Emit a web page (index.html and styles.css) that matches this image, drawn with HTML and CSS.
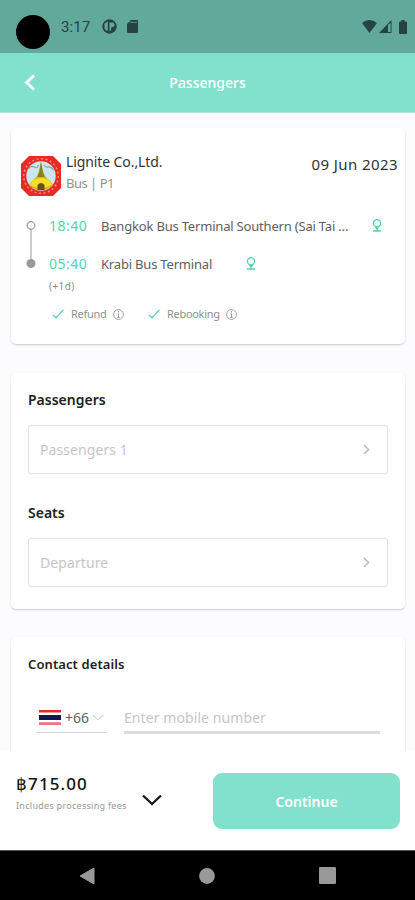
FILE: index.html
```html
<!DOCTYPE html>
<html lang="en">
<head>
<meta charset="utf-8">
<title>Passengers</title>
<link rel="stylesheet" href="styles.css">
</head>
<body>
<div class="status">
  <span class="camera"></span>
  <span class="clock">3:17</span>
  <svg class="s-app" width="15" height="15" viewBox="0 0 15 15"><circle cx="7.5" cy="7.5" r="7.2" fill="#27433f"/><path d="M2.500 4.500L5.800 2.200v9.300L4 11.500 2.500 9.500zM7.500 3.500h3.700l1.500 2-1 2.300-2.200.4L8.700 12h-1.200z" fill="#60a99b"/></svg>
  <svg class="s-sd" width="11" height="13" viewBox="0 0 11 13"><path d="M4 0h6a1 1 0 0 1 1 1v11a1 1 0 0 1-1 1H1a1 1 0 0 1-1-1V4z" fill="#27433f"/><path d="M3 2.400h7" stroke="#4b8579" stroke-width="1.200"/></svg>
  <span class="grow"></span>
  <svg width="15" height="13" viewBox="0 0 15 13"><path d="M0 3Q7.500-3 15 3L7.500 13z" fill="#27433f"/></svg>
  <svg class="s-cell" width="13" height="13" viewBox="0 0 13 13"><path d="M0 13L12.500 0v13z" fill="#27433f"/><path d="M9 5v7h2.600V3z" fill="#60a99b"/></svg>
  <svg class="s-bat" width="8" height="14" viewBox="0 0 8 14"><path d="M2.500 0h3v1.500H7a1 1 0 0 1 1 1V13a1 1 0 0 1-1 1H1a1 1 0 0 1-1-1V2.500a1 1 0 0 1 1-1h1.500z" fill="#27433f"/></svg>
</div>
<header class="bar">
  <svg class="back" width="12" height="17" viewBox="0 0 12 17"><path d="M10 1.500L2.500 8.500l7.500 7" fill="none" stroke="#fff" stroke-width="2.800"/></svg>
  <h1>Passengers</h1>
</header>
<main>
  <section class="card trip">
    <div class="operator">
      <svg width="40" height="40" viewBox="0 0 40 40"><path d="M8 0h24l3 3 5 5v24l-5 5-3 3H8l-3-3-5-5V8l5-5z" fill="#e92a24"/><circle cx="20" cy="20" r="17.300" fill="none" stroke="#f28d87" stroke-width="1.500" stroke-dasharray="2 2.500"/><circle cx="20" cy="20" r="14.700" fill="#cbe6ec"/><path d="M7.500 13q3-4 6-2t4-2M23 9q2 3 4 2t6 3" fill="none" stroke="#8ca3a5" stroke-width="1.200"/><path d="M20 5l2 10 2 5 5 5 3 4q-5 5-12 5T8 29l3-4 5-5 2-5z" fill="#d0b71f"/><path d="M20 6l1.800 10 2 5h-7.600l2-5z" fill="#85812b"/><path d="M12 24q8-4 16 0l3 5q-11 6-22 0z" fill="#f4df22"/><path d="M16.500 34v-5q3.500-4 7 0v5z" fill="#6e4a17"/></svg>
      <div class="who"><div class="name">Lignite Co.,Ltd.</div><div class="kind">Bus | P1</div></div>
      <div class="date">09 Jun 2023</div>
    </div>
    <div class="route">
      <svg class="line" width="10" height="50" viewBox="0 0 10 50"><path d="M5 9v32" stroke="#b0b0b0" stroke-width="1.300"/><circle cx="5" cy="5.500" r="3.800" fill="#fff" stroke="#999" stroke-width="1.200"/><circle cx="5" cy="43.500" r="4.500" fill="#999"/></svg>
      <div class="stops">
        <div class="stop"><span class="time">18:40</span><span class="place p1">Bangkok Bus Terminal Southern (Sai Tai ...</span><svg width="10" height="13" viewBox="0 0 10 13"><g fill="none" stroke="#55d2af" stroke-width="1.300"><circle cx="5" cy="4.300" r="3.600"/><path d="M3.300 7.500L5 10.500l1.700-3M5 8v4M.8 12h8.400"/></g></svg></div>
        <div class="stop"><span class="time">05:40</span><span class="place p2">Krabi Bus Terminal</span><svg width="10" height="13" viewBox="0 0 10 13"><g fill="none" stroke="#55d2af" stroke-width="1.300"><circle cx="5" cy="4.300" r="3.600"/><path d="M3.300 7.500L5 10.500l1.700-3M5 8v4M.8 12h8.400"/></g></svg></div>
        <div class="next">(+1d)</div>
      </div>
    </div>
    <div class="perks">
      <svg width="12" height="10" viewBox="0 0 12 10"><path d="M.8 5.800l3.200 3L11.300 1" fill="none" stroke="#66d6b5" stroke-width="1.400"/></svg>
      <span class="perk refund">Refund</span>
      <svg class="info" width="11" height="11" viewBox="0 0 11 11"><circle cx="5.500" cy="5.500" r="4.900" fill="none" stroke="#a0a0a0"/><path d="M5.500 2.200v1.300M4.500 4.800h1v3.500M4.200 8.400h2.600" fill="none" stroke="#999"/></svg>
      <svg class="tick2" width="12" height="10" viewBox="0 0 12 10"><path d="M.8 5.800l3.200 3L11.300 1" fill="none" stroke="#66d6b5" stroke-width="1.400"/></svg>
      <span class="perk rebook">Rebooking</span>
      <svg class="info" width="11" height="11" viewBox="0 0 11 11"><circle cx="5.500" cy="5.500" r="4.900" fill="none" stroke="#a0a0a0"/><path d="M5.500 2.200v1.300M4.500 4.800h1v3.500M4.200 8.400h2.600" fill="none" stroke="#999"/></svg>
    </div>
  </section>
  <section class="card choices">
    <h2 class="h-pass">Passengers</h2>
    <div class="field"><span class="f1">Passengers 1</span><svg width="7" height="11" viewBox="0 0 7 11"><path d="M1 1l4.500 4.500L1 10" fill="none" stroke="#bdbdbd" stroke-width="1.700"/></svg></div>
    <h2 class="h-seats">Seats</h2>
    <div class="field"><span class="f2">Departure</span><svg width="7" height="11" viewBox="0 0 7 11"><path d="M1 1l4.500 4.500L1 10" fill="none" stroke="#bdbdbd" stroke-width="1.700"/></svg></div>
  </section>
  <section class="card contact">
    <h2 class="h-contact">Contact details</h2>
    <div class="phone">
      <div class="code">
        <svg width="22" height="15" viewBox="0 0 22 15"><path fill="#fff" d="M0 0h22v15H0z"/><path fill="#e22b2e" d="M0 0h22v2.500H0z"/><path fill="#15154f" d="M0 5h22v5H0z"/><path fill="#f0747a" d="M0 12.200h22V15H0z"/></svg>
        <span>+66</span>
        <svg width="12" height="7" viewBox="0 0 12 7"><path d="M.7.800L6 5.800 11.300.800" fill="none" stroke="#ccc" stroke-width="1.100"/></svg>
      </div>
      <div class="number">Enter mobile number</div>
    </div>
  </section>
</main>
<footer>
  <div class="total"><div class="price">฿715.00</div><div class="fees">Includes processing fees</div></div>
  <svg class="expand" width="20" height="12" viewBox="0 0 20 12"><path d="M1 1.500l9 8.500 9-8.500" fill="none" stroke="#161616" stroke-width="2.300"/></svg>
  <button>Continue</button>
</footer>
<nav>
  <svg width="16" height="18" viewBox="0 0 16 18"><path d="M15 1v16L1 9z" fill="#999" stroke="#999" stroke-linejoin="round"/></svg>
  <svg width="16" height="16" viewBox="0 0 16 16"><circle cx="8" cy="8" r="7.900" fill="#999"/></svg>
  <svg width="17" height="17" viewBox="0 0 17 17"><rect width="17" height="17" rx="1.300" fill="#999"/></svg>
</nav>
</body>
</html>
```
FILE: styles.css
```css
* { box-sizing: border-box; }
body {
  margin: 0;
  width: 415px;
  height: 900px;
  display: flex;
  flex-direction: column;
  overflow: hidden;
  background: #fcfcfe;
  color: #333;
  font-family: "Noto Sans", sans-serif;
  white-space: nowrap;
}
svg { display: block; flex: none; }
h1, h2 { margin: 0; }
.grow { flex: 1; }

.status {
  height: 53px;
  flex: none;
  display: flex;
  align-items: center;
  padding: 0 8px 0 16px;
  background: #60a99b;
}
.camera {
  width: 34px;
  height: 34px;
  margin-top: 11px;
  border-radius: 50%;
  background: #000;
}
.clock {
  width: 41px;
  margin-left: 11px;
  font: 15px/20px Roboto, sans-serif;
  letter-spacing: .1px;
  color: #27433f;
}
.s-sd { margin-left: 10px; }
.s-cell { margin-left: 2px; }
.s-bat { margin-left: 7px; }

.bar {
  height: 60px;
  flex: none;
  display: grid;
  grid-template-columns: 24px 1fr 24px;
  align-items: center;
  padding: 0 24px;
  background: #82e1cd;
  border-bottom: 1px solid #b4e5da;
}
.bar h1 {
  text-align: center;
  font-size: 14px;
  line-height: 20px;
  font-weight: 500;
  color: #fff;
}

main { flex: 1; min-height: 0; overflow: hidden; padding: 15px 10px 0 11px; }
.card {
  background: #fff;
  border-radius: 5px;
  box-shadow: 0 1px 2px rgba(0, 0, 0, .2);
}
.trip { height: 216px; padding: 24px 7px 0 10px; }
.operator { display: flex; height: 64px; }
.operator > svg { margin-top: 4px; }
.who { margin-left: 5px; flex: 1; }
.name { font-size: 14px; line-height: 20px; letter-spacing: -.1px; color: #333; }
.kind { font-size: 13px; line-height: 20px; letter-spacing: -.5px; margin-top: 1px; color: #8f8f8f; }
.date { font-size: 15px; line-height: 20px; letter-spacing: .42px; margin-top: 2px; color: #333; }
.route { display: flex; height: 90px; padding-left: 5px; }
.line { margin-top: 4px; }
.stops { margin-left: 13px; }
.stop { display: flex; height: 38px; line-height: 20px; }
.stop svg { margin-top: 3px; }
.time { width: 52px; font-size: 14px; letter-spacing: .5px; color: #55d2af; }
.place { font-size: 13px; letter-spacing: -.19px; color: #606060; }
.p1 { width: 271px; }
.p2 { width: 145px; }
.next { font-size: 10px; line-height: 14px; letter-spacing: .4px; margin-top: -13px; color: #8c8c8c; }
.perks { display: flex; align-items: center; height: 16px; padding-left: 31px; }
.perk { margin-left: 7px; font-size: 11px; line-height: 16px; letter-spacing: -.3px; color: #8f8f8f; }
.refund { width: 42px; }
.rebook { width: 59px; }
.tick2 { margin-left: 24px; }

.choices { height: 236px; margin-top: 29px; padding: 17px 17px 0; }
h2 { font-size: 14px; line-height: 20px; font-weight: 600; color: #222; }
.field {
  height: 49px;
  margin-top: 15px;
  display: flex;
  align-items: center;
  justify-content: space-between;
  padding: 0 17px 0 11px;
  border: 1px solid #e4e4e4;
  border-radius: 3px;
  box-shadow: 0 0 1px #ddd;
  font-size: 14px;
  letter-spacing: .08px;
  color: #c6c6c6;
}
.h-seats { margin-top: 29px; }

.contact { height: 140px; margin-top: 28px; padding: 17px 25px 0 17px; }
.h-contact { font-size: 13px; letter-spacing: .1px; }
.phone { display: flex; justify-content: space-between; margin-top: 27px; padding-left: 8px; }
.code {
  width: 71px;
  height: 32px;
  display: flex;
  align-items: center;
  padding: 1px 3px 0;
  border-bottom: 1px solid #d8d8d8;
  font-size: 14px;
  color: #606060;
}
.code span { width: 27px; margin-left: 4px; }
.number {
  width: 256px;
  height: 33px;
  border-bottom: 3px solid #dcdcdc;
  font-size: 14px;
  line-height: 33px;
  letter-spacing: .08px;
  color: #c6c6c6;
}

footer {
  height: 99px;
  flex: none;
  display: flex;
  padding: 22px 15px 0 16px;
  background: #fff;
}
.total { width: 126px; }
.price { font-size: 17px; line-height: 22px; letter-spacing: 1.1px; font-weight: 500; color: #111; }
.fees { font-size: 9px; line-height: 14px; letter-spacing: .28px; margin-top: 4px; color: #999; }
.expand { margin-top: 21px; }
button {
  width: 187px;
  height: 56px;
  margin-left: auto;
  border: 0;
  border-radius: 9px;
  background: #82e1cd;
  color: #fff;
  font: 600 14px "Noto Sans", sans-serif;
}
nav {
  height: 50px;
  flex: none;
  display: flex;
  align-items: center;
  justify-content: space-between;
  padding: 0 79px;
  background: #000;
  border-top: 1px solid #555;
}
```
